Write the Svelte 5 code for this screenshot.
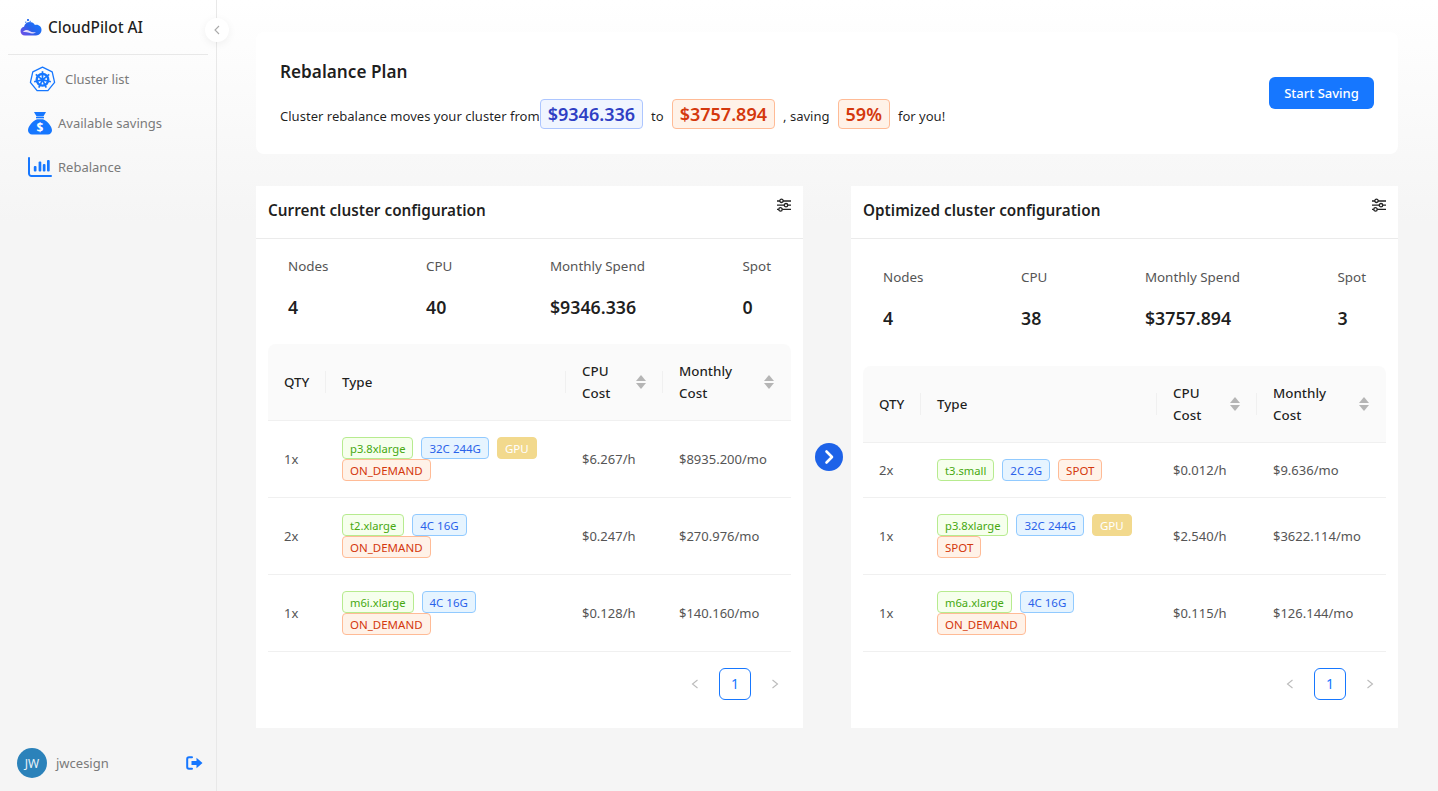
<script>
  const panels = [
    {
      title: 'Current cluster configuration',
      variant: 'current',
      stats: { nodes: 4, cpu: 40, spend: '$9346.336', spot: 0 },
      rows: [
        { qty: '1x', tags: ['p3.8xlarge', '32C 244G', 'GPU', 'ON_DEMAND'], cpu: '$6.267/h', monthly: '$8935.200/mo' },
        { qty: '2x', tags: ['t2.xlarge', '4C 16G', 'ON_DEMAND'], cpu: '$0.247/h', monthly: '$270.976/mo' },
        { qty: '1x', tags: ['m6i.xlarge', '4C 16G', 'ON_DEMAND'], cpu: '$0.128/h', monthly: '$140.160/mo' }
      ]
    },
    {
      title: 'Optimized cluster configuration',
      variant: 'optimized',
      stats: { nodes: 4, cpu: 38, spend: '$3757.894', spot: 3 },
      rows: [
        { qty: '2x', tags: ['t3.small', '2C 2G', 'SPOT'], cpu: '$0.012/h', monthly: '$9.636/mo' },
        { qty: '1x', tags: ['p3.8xlarge', '32C 244G', 'GPU', 'SPOT'], cpu: '$2.540/h', monthly: '$3622.114/mo' },
        { qty: '1x', tags: ['m6a.xlarge', '4C 16G', 'ON_DEMAND'], cpu: '$0.115/h', monthly: '$126.144/mo' }
      ]
    }
  ];

  function tagClass(t, i) {
    if (t === 'GPU') return 'gpu';
    if (t === 'SPOT' || t === 'ON_DEMAND') return 'volcano';
    return i === 0 ? 'green' : 'blue';
  }

  // spokes of the kubernetes wheel
  const spokes = [0, 1, 2, 3, 4, 5, 6].map((i) => (i * 360) / 7);
</script>

<div class="layout">
  <aside class="sider">
    <div class="logo">
      <svg width="22" height="18" viewBox="0 0 22 18">
        <defs>
          <linearGradient id="cloudGrad" x1="0" y1="1" x2="1" y2="0.3">
            <stop offset="0" stop-color="#7a4be6" />
            <stop offset="0.55" stop-color="#2a62ea" />
            <stop offset="1" stop-color="#1677ff" />
          </linearGradient>
        </defs>
        <path d="M5 17.500C2.200 17.500.5 15.400.5 13c0-2.200 1.500-3.900 3.500-4.200C4.700 6 7 4 9.800 4c2.300 0 4.200 1.200 5.100 3 .5-.2 1-.3 1.600-.3 2.800 0 5 2.300 5 5.100 0 3.200-2.300 5.700-5.500 5.700z" fill="url(#cloudGrad)" />
        <path d="M3 14c1.800-2.200 4.500-2.400 6.500-1 2 1.300 4.200 1.700 6.500 1-2 1.800-4.800 1.900-7 .8C7 14 5 13.700 3 14z" fill="#e4dcfb" />
        <rect x="7" y="1" width="2" height="2" fill="#3d7bf0" />
        <rect x="9.500" y="2.800" width="1.500" height="1.500" fill="#6aa0f5" />
        <rect x="5" y="3.500" width="1.500" height="1.500" fill="#6aa0f5" />
      </svg>
      <span>CloudPilot AI</span>
    </div>
    <button class="collapse" aria-label="collapse">
      <svg width="6" height="10" viewBox="0 0 6 10"><path d="M5 1 1 5l4 4" fill="none" stroke="#aaa" stroke-width="1.100" /></svg>
    </button>
    <nav class="menu">
      <a class="item kube">
        <svg width="27" height="27" viewBox="0 0 27 27">
          <path d="M13.500 1.200 23.200 5.800l2.400 10.500-6.700 8.400H8.100L1.400 16.300 3.800 5.800z" fill="none" stroke="#1677ff" stroke-width="1.300" stroke-linejoin="round" />
          <circle cx="13.500" cy="13.800" r="5.800" fill="none" stroke="#1677ff" stroke-width="2.400" />
          {#each spokes as a}
            <line x1="13.500" y1="13.800" x2="13.500" y2="5.200" stroke="#1677ff" stroke-width="1.700" transform="rotate({a} 13.500 13.800)" />
          {/each}
          <circle cx="13.500" cy="13.800" r="2" fill="#1677ff" />
        </svg>
        <span>Cluster list</span>
      </a>
      <a class="item">
        <svg width="24" height="24" viewBox="0 0 24 24">
          <path d="M6 1h12l-2.600 4.400H8.600z" fill="#1677ff" />
          <rect x="8" y="6" width="8" height="1.300" fill="#1677ff" />
          <path d="M9 8.200h6c4 1.500 9 7 9 11 0 2.600-2 4.300-4 4.300H4c-2 0-4-1.700-4-4.300 0-4 5-9.500 9-11z" fill="#1677ff" />
          <text x="12" y="20.500" text-anchor="middle" class="dollar">$</text>
        </svg>
        <span>Available savings</span>
      </a>
      <a class="item">
        <svg width="24" height="20" viewBox="0 0 24 20">
          <path d="M1 1v15.500A2.500 2.500 0 0 0 3.500 19H23" fill="none" stroke="#1677ff" stroke-width="2" stroke-linecap="round" />
          <rect x="5.800" y="9" width="2.700" height="5.500" rx="1" fill="#1677ff" />
          <rect x="10.600" y="4.500" width="2.700" height="10" rx="1" fill="#1677ff" />
          <rect x="14.800" y="7" width="2.700" height="7.500" rx="1" fill="#1677ff" />
          <rect x="19" y="3" width="2.700" height="11.500" rx="1" fill="#1677ff" />
        </svg>
        <span>Rebalance</span>
      </a>
    </nav>
    <div class="user">
      <div class="avatar">JW</div>
      <span class="name">jwcesign</span>
      <svg class="logout" width="17" height="14" viewBox="0 0 17 14">
        <path d="M6 1.200H3A1.800 1.800 0 0 0 1.200 3v8A1.800 1.800 0 0 0 3 12.800h3" fill="none" stroke="#1677ff" stroke-width="2" stroke-linecap="round" />
        <path d="M5.500 5h5V1.800L16.500 7l-6 5.200V9h-5z" fill="#1677ff" />
      </svg>
    </div>
  </aside>

  <main class="content">
    <section class="plan">
      <div class="planText">
        <h1>Rebalance Plan</h1>
        <div class="sentence">
          Cluster rebalance moves your cluster from<span class="amount from">$9346.336</span>
          <span class="word">to</span>
          <span class="amount to">$3757.894</span>
          <span class="word">, saving</span>
          <span class="amount to">59%</span>
          <span class="word">for you!</span>
        </div>
      </div>
      <button class="primary">Start Saving</button>
    </section>

    <div class="compare">
      {#each panels as p, pi}
        <section class="panel {p.variant}">
          <header class="panelHead">
            <h2>{p.title}</h2>
            <svg class="sliders" width="16" height="14" viewBox="0 0 16 14">
              <g fill="none" stroke="#222" stroke-width="1.300">
                <path d="M1 3h14M1 7.200h14M1 11.400h14" />
                <circle cx="5.500" cy="2.800" r="1.700" fill="#fff" />
                <circle cx="10" cy="7.200" r="1.700" fill="#fff" />
                <circle cx="4.500" cy="11.400" r="1.700" fill="#fff" />
              </g>
            </svg>
          </header>
          <div class="stats">
            <div class="stat"><div class="label">Nodes</div><div class="value">{p.stats.nodes}</div></div>
            <div class="stat"><div class="label">CPU</div><div class="value">{p.stats.cpu}</div></div>
            <div class="stat"><div class="label">Monthly Spend</div><div class="value">{p.stats.spend}</div></div>
            <div class="stat"><div class="label">Spot</div><div class="value">{p.stats.spot}</div></div>
          </div>
          <table>
            <colgroup>
              <col class="cQty" />
              <col class="cType" />
              <col class="cCpu" />
              <col class="cMonth" />
            </colgroup>
            <thead>
              <tr>
                <th><span class="sep"></span>QTY</th>
                <th><span class="sep"></span>Type</th>
                <th>
                  <span class="sep"></span>
                  <div class="sortable">
                    <span>CPU<br />Cost</span>
                    <span class="carets"><i class="up"></i><i class="down"></i></span>
                  </div>
                </th>
                <th>
                  <div class="sortable">
                    <span>Monthly<br />Cost</span>
                    <span class="carets"><i class="up"></i><i class="down"></i></span>
                  </div>
                </th>
              </tr>
            </thead>
            <tbody>
              {#each p.rows as r}
                <tr>
                  <td>{r.qty}</td>
                  <td>
                    <div class="tags">
                      {#each r.tags as t, i}
                        <span class="tag {tagClass(t, i)}">{t}</span>
                      {/each}
                    </div>
                  </td>
                  <td>{r.cpu}</td>
                  <td>{r.monthly}</td>
                </tr>
              {/each}
            </tbody>
          </table>
          <div class="pager">
            <svg width="10" height="10" viewBox="0 0 10 10"><path d="M7.500 1 2.500 5l5 4" fill="none" stroke="#bbb" stroke-width="1.100" /></svg>
            <span class="page">1</span>
            <svg width="10" height="10" viewBox="0 0 10 10"><path d="M2.500 1l5 4-5 4" fill="none" stroke="#bbb" stroke-width="1.100" /></svg>
          </div>
        </section>
        {#if pi === 0}
          <div class="arrow">
            <svg width="28" height="28" viewBox="0 0 28 28">
              <circle cx="14" cy="14" r="14" fill="#1d62e8" />
              <path d="M11.500 8.500 17 14l-5.500 5.500" fill="none" stroke="#fff" stroke-width="2.600" stroke-linecap="round" stroke-linejoin="round" />
            </svg>
          </div>
        {/if}
      {/each}
    </div>
  </main>
</div>

<style>
  :global(body) {
    font-family: "Noto Sans", "Open Sans", sans-serif;
    font-size: 14px;
    color: rgba(0, 0, 0, 0.88);
    background: #f5f5f5;
  }

  .layout { display: flex; height: 791px; background: linear-gradient(#fff, #f5f5f5 28%); overflow: hidden; }

  /* sidebar */
  .sider {
    position: relative;
    width: 216px;
    flex-shrink: 0;
    border-right: 1px solid #e8e8e8;
    display: flex;
    flex-direction: column;
  }
  .logo {
    height: 54px;
    margin: 0 8px;
    padding-left: 12px;
    border-bottom: 1px solid #e8e8e8;
    display: flex;
    align-items: center;
    gap: 6px;
    font-size: 15.4px;
    font-weight: 500;
    box-sizing: content-box;
  }
  .collapse {
    position: absolute;
    top: 18px;
    left: 205px;
    width: 24px;
    height: 24px;
    padding: 0;
    border: 0;
    border-radius: 50%;
    background: #fff;
    box-shadow: 0 2px 8px rgba(0, 0, 0, 0.06);
    display: flex;
    align-items: center;
    justify-content: center;
  }
  .menu { display: flex; flex-direction: column; padding-top: 2px; }
  .item {
    height: 44px;
    padding-left: 28px;
    display: flex;
    align-items: center;
    gap: 6px;
    color: #7a7a7a;
    font-size: 13px;
  }
  .item.kube { padding-left: 29px; gap: 9px; }
  .dollar { font: 700 12px "Noto Sans", sans-serif; fill: #fff; }
  .user {
    margin-top: auto;
    height: 56px;
    padding: 0 13px 0 17px;
    display: flex;
    align-items: center;
    gap: 9px;
    color: #7a7a7a;
    font-size: 13px;
  }
  .avatar {
    width: 30px;
    height: 30px;
    border-radius: 50%;
    background: #2b82ba;
    color: #e8f2f8;
    font-size: 12px;
    display: flex;
    align-items: center;
    justify-content: center;
  }
  .logout { margin-left: auto; }

  /* main */
  .content { flex: 1; padding: 32px 40px 0 39px; display: flex; flex-direction: column; }
  .plan {
    height: 122px;
    box-sizing: border-box;
    padding: 0 24px;
    background: #fff;
    border-radius: 8px;
    display: flex;
    align-items: center;
    justify-content: space-between;
  }
  .planText { padding-top: 3px; }
  h1 { margin: 0 0 15px; font-size: 17.2px; font-weight: 600; line-height: 24px; }
  .sentence { display: flex; align-items: baseline; font-size: 13.05px; white-space: nowrap; }
  .word { margin: 0 8px; }
  .amount {
    padding: 0 7px;
    height: 30px;
    box-sizing: border-box;
    border: 1px solid;
    border-radius: 4px;
    font-size: 18px;
    font-weight: 600;
    line-height: 28px;
  }
  .from { color: #2f3fc4; background: #f0f5ff; border-color: #adc6ff; }
  .to { color: #d4380d; background: #fff2e8; border-color: #ffbb96; }
  .primary {
    width: 105px;
    height: 32px;
    border: 0;
    border-radius: 6px;
    background: #1677ff;
    color: #fff;
    font: inherit;
    font-size: 13px;
    font-weight: 500;
  }

  .compare { margin-top: 32px; display: flex; }
  .arrow { width: 48px; box-sizing: border-box; padding-left: 4px; flex-shrink: 0; display: flex; justify-content: center; align-items: center; }
  .panel { width: 547px; height: 542px; background: #fff; display: flex; flex-direction: column; }
  .panelHead {
    height: 47px;
    flex-shrink: 0;
    padding: 0 12px 5px;
    box-sizing: content-box;
    border-bottom: 1px solid #ebebeb;
    display: flex;
    align-items: center;
    justify-content: space-between;
    position: relative;
  }
  h2 { margin: 0; font-size: 15.3px; font-weight: 600; }
  .sliders { position: absolute; right: 11px; top: 12px; }
  .stats {
    flex: 1;
    padding: 0 32px 8px;
    display: flex;
    align-items: center;
    justify-content: space-between;
  }
  .label { color: #555; font-size: 13.4px; line-height: 20px; margin-bottom: 19px; }
  .value { font-size: 17.8px; font-weight: 600; line-height: 24px; }

  table {
    width: 523px;
    margin: 0 12px;
    border-collapse: separate;
    border-spacing: 0;
    table-layout: fixed;
    flex-shrink: 0;
    font-size: 13px;
  }
  .cQty { width: 58px; }
  .cType { width: 240px; }
  .cCpu { width: 97px; }
  .cMonth { width: 128px; }
  .optimized .cType { width: 236px; }
  .optimized .cCpu { width: 100px; }
  .optimized .cMonth { width: 129px; }

  th {
    position: relative;
    height: 76px;
    padding: 0 16px;
    background: #fafafa;
    border-bottom: 1px solid #f0f0f0;
    text-align: left;
    font-size: 13.4px;
    font-weight: 500;
    line-height: 22px;
  }
  th:first-child { border-top-left-radius: 8px; }
  th:last-child { border-top-right-radius: 8px; }
  .sep {
    position: absolute;
    right: 0;
    top: 50%;
    width: 1px;
    height: 22px;
    margin-top: -11px;
    background: #f0f0f0;
  }
  .sortable { display: flex; align-items: center; justify-content: space-between; }
  .carets { display: flex; flex-direction: column; gap: 2px; margin-right: 1px; }
  .carets i { display: block; width: 0; height: 0; border-left: 5px solid transparent; border-right: 5px solid transparent; }
  .carets .up { border-bottom: 6px solid #b5b5b5; }
  .carets .down { border-top: 6px solid #b5b5b5; }

  td { padding: 16px; border-bottom: 1px solid #f0f0f0; color: #555; vertical-align: middle; }
  .tags { display: flex; flex-wrap: wrap; column-gap: 8px; }
  .tag {
    box-sizing: border-box;
    height: 22px;
    padding: 0 7px;
    border: 1px solid;
    border-radius: 4px;
    font-size: 11.5px;
    line-height: 21px;
    white-space: nowrap;
  }
  .green { color: #46a80f; background: #f6ffed; border-color: #b7eb8f; font-size: 11.2px; }
  .blue { color: #2a62ea; background: #e6f4ff; border-color: #91caff; }
  .volcano { color: #d4380d; background: #fff2e8; border-color: #ffbb96; }
  .gpu { color: #fff; background: #f2d98d; border-color: #f2d98d; }

  .pager { height: 76px; flex-shrink: 0; padding: 0 23px 12px 0; box-sizing: border-box; display: flex; align-items: center; justify-content: flex-end; gap: 19px; }
  .page {
    width: 32px;
    height: 32px;
    box-sizing: border-box;
    border: 1px solid #1677ff;
    border-radius: 6px;
    color: #1677ff;
    line-height: 30px;
    text-align: center;
  }
</style>
